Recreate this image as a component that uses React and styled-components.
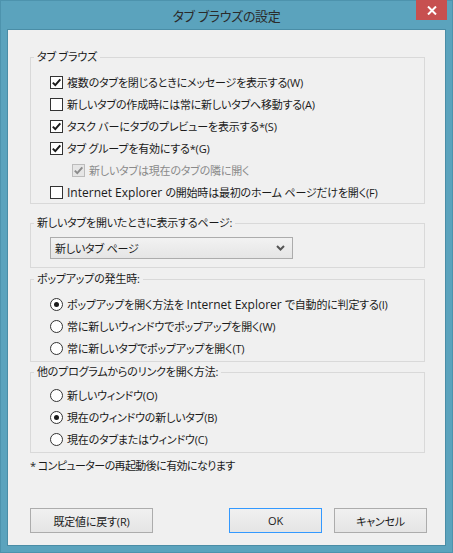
import styled, { createGlobalStyle } from "styled-components"

// Windows 8 style "タブ ブラウズの設定" dialog

const Global = createGlobalStyle`
  html, body {
    margin: 0;
    padding: 0;
    background: #5ba3bd;
  }
  * {
    box-sizing: border-box;
  }
`

const FONT = `"Open Sans", "Noto Sans CJK JP", sans-serif`

const Window = styled.div`
  width: 453px;
  height: 553px;
  background: #5ba3bd;
  border: 1px solid #4d93ad;
  display: flex;
  flex-direction: column;
  font-family: ${FONT};
  font-feature-settings: "palt";
`
const TitleBar = styled.div`
  height: 28px;
  display: grid;
  grid-template-columns: 1fr auto 1fr;
  align-items: center;
`
const Title = styled.div`
  grid-column: 2;
  font-size: 13px;
  letter-spacing: -0.3px;
  color: #2b2b2b;
  padding-top: 1px;
`
const CloseButton = styled.div`
  grid-column: 3;
  justify-self: end;
  align-self: start;
  width: 31px;
  height: 20px;
  margin-right: 5px;
  margin-top: -1px;
  background: #c75050;
  display: flex;
  align-items: center;
  justify-content: center;
`
const Client = styled.div`
  margin: 0 6px;
  height: 517px;
  background: #f0f0f0;
  border: 1px solid #4a8da6;
  padding: 19px 20px 12px 22px;
  display: flex;
  flex-direction: column;
  font-size: 11px;
  letter-spacing: -0.2px;
  color: #1a1a1a;
`
const Group = styled.fieldset`
  margin: ${(p) => p.top || 0}px 0 0 0;
  padding: 0 0 0 3px;
  border: 1px solid #d9d9d9;
  min-width: 0;
`
const Legend = styled.legend`
  padding: 0 3px;
  line-height: 16px;
`
const GroupBody = styled.div`
  padding: ${(p) => p.pt || 0}px 0 ${(p) => p.pb || 0}px 16px;
  display: flex;
  flex-direction: column;
`
const Row = styled.div`
  height: 22px;
  display: flex;
  align-items: center;
  gap: 4px;
  padding-left: ${(p) => (p.indent ? 22 : 0)}px;
  color: ${(p) => (p.disabled ? "#8a8a8a" : "inherit")};
  white-space: pre;
`
const Latin = styled.span`
  font-size: 12px;
  letter-spacing: 0;
`
const Box = styled.span`
  width: 13px;
  height: 13px;
  flex: none;
  border: 1px solid ${(p) => (p.disabled ? "#bcbcbc" : "#333")};
  background: ${(p) => (p.disabled ? "#e6e6e6" : "#fff")};
  display: flex;
  align-items: center;
  justify-content: center;
`
const Circle = styled.span`
  width: 13px;
  height: 13px;
  flex: none;
  border-radius: 50%;
  border: 1px solid #333;
  background: #fff;
  display: flex;
  align-items: center;
  justify-content: center;
`
const Dot = styled.span`
  width: 5px;
  height: 5px;
  border-radius: 50%;
  background: #1a1a1a;
`
const Select = styled.div`
  width: 243px;
  height: 22px;
  border: 1px solid #acacac;
  background: linear-gradient(#f2f2f2, #e5e5e5);
  display: flex;
  align-items: center;
  justify-content: space-between;
  padding: 0 7px 0 4px;
`
const Note = styled.div`
  margin-top: 5px;
  line-height: 16px;
  letter-spacing: -0.6px;
`
const ButtonRow = styled.div`
  margin-top: auto;
  display: flex;
  align-items: center;
  margin-right: -2px;
`
const Button = styled.div`
  width: ${(p) => p.w}px;
  height: 25px;
  border: 1px solid ${(p) => (p.primary ? "#3399ff" : "#acacac")};
  background: linear-gradient(#f0f0f0, #e5e5e5);
  display: flex;
  align-items: center;
  justify-content: center;
  margin-left: ${(p) => p.ml || 0}px;
`
const Spacer = styled.div`
  flex: 1;
`

function Check({ checked, disabled }) {
  return (
    <Box disabled={disabled}>
      {checked && (
        <svg width="11" height="11" viewBox="0 0 11 11">
          <path
            d="M1.8 5.6 L4.3 8.1 L9.3 2.4"
            fill="none"
            stroke={disabled ? "#8c8c8c" : "#1a1a1a"}
            strokeWidth="2"
          />
        </svg>
      )}
    </Box>
  )
}

function Radio({ checked }) {
  return <Circle>{checked && <Dot />}</Circle>
}

function App() {
  return (
    <>
      <Global />
      <Window>
        <TitleBar>
          <Title>タブ ブラウズの設定</Title>
          <CloseButton>
            <svg width="10" height="9" viewBox="0 0 10 9">
              <path d="M1 0.5 L9 8.5 M9 0.5 L1 8.5" stroke="#fff" strokeWidth="2" />
            </svg>
          </CloseButton>
        </TitleBar>
        <Client>
          <Group>
            <Legend>タブ ブラウズ</Legend>
            <GroupBody pt={6} pb={0}>
              <Row><Check checked /><span>複数のタブを閉じるときにメッセージを表示する(W)</span></Row>
              <Row><Check /><span>新しいタブの作成時には常に新しいタブへ移動する(A)</span></Row>
              <Row><Check checked /><span>タスク バーにタブのプレビューを表示する*(S)</span></Row>
              <Row><Check checked /><span>タブ グループを有効にする*(G)</span></Row>
              <Row indent disabled><Check checked disabled /><span>新しいタブは現在のタブの隣に開く</span></Row>
              <Row><Check /><span><Latin>Internet Explorer </Latin>の開始時は最初のホーム ページだけを開く(F)</span></Row>
            </GroupBody>
          </Group>

          <Group top={11}>
            <Legend>新しいタブを開いたときに表示するページ:</Legend>
            <GroupBody pt={6} pb={8}>
              <Select>
                <span>新しいタブ ページ</span>
                <svg width="9" height="6" viewBox="0 0 9 6">
                  <path d="M1 1 L4.5 4.5 L8 1" fill="none" stroke="#555" strokeWidth="2" />
                </svg>
              </Select>
            </GroupBody>
          </Group>

          <Group top={3}>
            <Legend>ポップアップの発生時:</Legend>
            <GroupBody pt={6} pb={2}>
              <Row><Radio checked /><span>ポップアップを開く方法を <Latin>Internet Explorer </Latin>で自動的に判定する(I)</span></Row>
              <Row><Radio /><span>常に新しいウィンドウでポップアップを開く(W)</span></Row>
              <Row><Radio /><span>常に新しいタブでポップアップを開く(T)</span></Row>
            </GroupBody>
          </Group>

          <Group top={2}>
            <Legend>他のプログラムからのリンクを開く方法:</Legend>
            <GroupBody pt={4} pb={2}>
              <Row><Radio /><span>新しいウィンドウ(O)</span></Row>
              <Row><Radio checked /><span>現在のウィンドウの新しいタブ(B)</span></Row>
              <Row><Radio /><span>現在のタブまたはウィンドウ(C)</span></Row>
            </GroupBody>
          </Group>

          <Note>* コンピューターの再起動後に有効になります</Note>

          <ButtonRow>
            <Button w={123}>既定値に戻す(R)</Button>
            <Spacer />
            <Button w={93} primary>OK</Button>
            <Button w={93} ml={12}>キャンセル</Button>
          </ButtonRow>
        </Client>
      </Window>
    </>
  )
}

export default App
